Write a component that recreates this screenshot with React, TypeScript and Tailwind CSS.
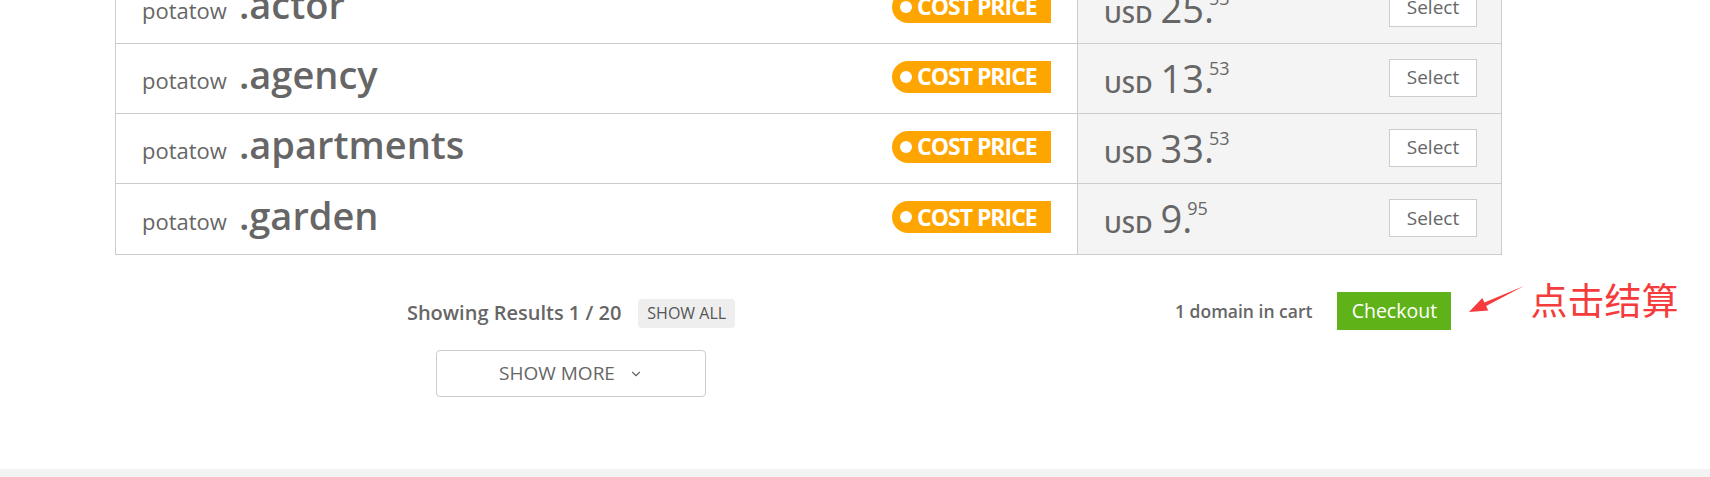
import { ChevronDown } from "lucide-react";

const rows = [
  { ext: ".actor", whole: "25.", cents: "53" },
  { ext: ".agency", whole: "13.", cents: "53" },
  { ext: ".apartments", whole: "33.", cents: "53" },
  { ext: ".garden", whole: "9.", cents: "95" },
];

function DomainRow({ ext, whole, cents }: { ext: string; whole: string; cents: string }) {
  return (
    <div className="flex h-[70px]">
      <div className="flex flex-1 items-center pl-[26px] pr-[26px]">
        <div className="flex items-baseline pb-[8px] text-[#666]">
          <span className="text-[22px]">potatow</span>
          <span className="ml-[12px] text-[38px] font-semibold">{ext}</span>
        </div>
        <span className="ml-auto mb-[4px] flex h-[32px] w-[159px] items-center rounded-l-full rounded-r-[3px] bg-[#ffa500] pl-[8px]">
          <span className="h-[12px] w-[12px] shrink-0 rounded-full bg-white" />
          <span className="ml-[5px] text-[23px] font-bold leading-none tracking-[-1px] text-white">COST PRICE</span>
        </span>
      </div>
      <div className="flex w-[424px] items-center border-l border-[#ccc] bg-[#f4f4f4] pl-[26px] pr-[24px]">
        <div className="flex items-baseline pt-[3px] text-[#666]">
          <span className="text-[24px] font-semibold">USD</span>
          <span className="ml-[8px] text-[38px] font-medium leading-none">{whole}</span>
          <span className="-ml-[5px] self-start text-[18px] leading-none">{cents}</span>
        </div>
        <button className="ml-auto mb-[2px] h-[38px] w-[88px] border border-[#ccc] bg-white text-[19px] text-[#666]">
          Select
        </button>
      </div>
    </div>
  );
}

function Arrow() {
  return (
    <svg width="62" height="34" viewBox="0 0 62 34" className="shrink-0">
      <polygon
        points="4,30 17.3,16 19.4,20.5 59,4 21.1,24.1 23.3,28.6"
        fill="#f53b3b"
      />
    </svg>
  );
}

export default function App() {
  return (
    <div className="min-h-[477px] overflow-hidden bg-white font-['Open_Sans',sans-serif]">
      <div className="pb-[72px]">
        <div className="-mt-[27px] ml-[115px] w-[1387px] divide-y divide-[#ccc] border border-[#ccc]">
          {rows.map((r) => (
            <DomainRow key={r.ext} {...r} />
          ))}
        </div>

        <div className="ml-[115px] mt-[37px] flex items-start">
          <div className="flex w-[912px] flex-col items-center">
            <div className="flex h-[42px] items-center">
              <span className="text-[20px] font-semibold text-[#666]">Showing Results 1 / 20</span>
              <span className="ml-[17px] flex h-[29px] items-center rounded-[4px] bg-[#eee] px-[9px] text-[16px] font-medium text-[#555]">
                SHOW ALL
              </span>
            </div>
            <button className="mt-[16px] flex h-[47px] w-[270px] items-center justify-center gap-[14px] rounded-[4px] border border-[#ccc] bg-white text-[19px] text-[#666]">
              SHOW MORE
              <ChevronDown className="h-[14px] w-[14px]" strokeWidth={2} />
            </button>
          </div>
          <div className="ml-[148px] flex h-[38px] items-center">
            <span className="text-[17.5px] font-semibold text-[#666]">1 domain in cart</span>
            <button className="ml-[25px] h-[38px] w-[114px] bg-[#5fb319] text-[19.5px] text-white">
              Checkout
            </button>
            <div className="mb-[24px] ml-[14px] flex items-center">
              <Arrow />
              <span className="ml-[3px] font-['Noto_Sans_CJK_SC',sans-serif] text-[37px] leading-none text-[#f53b3b]">
                点击结算
              </span>
            </div>
          </div>
        </div>
      </div>
      <div className="h-[40px] bg-[#f3f3f3]" />
    </div>
  );
}
